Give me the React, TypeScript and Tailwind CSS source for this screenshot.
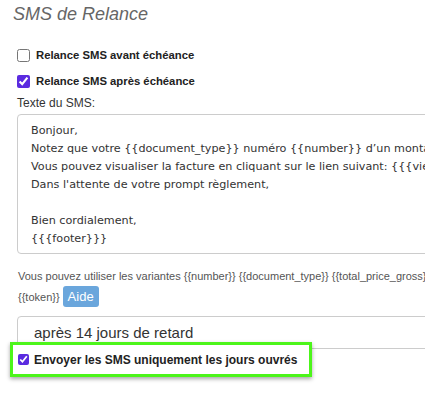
export default function App() {
  const lines = [
    'Bonjour,',
    'Notez que votre {{document_type}} numéro {{number}} d’un montant de {{total_price_gross}} est arrivée à échéance.',
    'Vous pouvez visualiser la facture en cliquant sur le lien suivant: {{{view_link}}}',
    "Dans l'attente de votre prompt règlement,",
    '',
    'Bien cordialement,',
    '{{{footer}}}',
  ];

  return (
    <div className="w-[425px] h-[395px] overflow-hidden bg-white font-['Liberation_Sans',Arial,sans-serif] text-[#333]">
      <div className="w-[600px] pl-[13px] pt-[2px]">
        {/* Title */}
        <h2 className="text-[18px] italic text-[#666] leading-[24px]">SMS de Relance</h2>

        {/* Checkboxes */}
        <div className="mt-[23px] pl-[4px] flex flex-col gap-[13px]">
          <label className="flex items-center gap-[6px] text-[11.3px] font-bold text-[#222] leading-[13px] whitespace-nowrap">
            <input type="checkbox" className="w-[13px] h-[13px] m-0 accent-[#5b2be0]" />
            Relance SMS avant échéance
          </label>
          <label className="flex items-center gap-[6px] text-[11.3px] font-bold text-[#222] leading-[13px] whitespace-nowrap">
            <input type="checkbox" defaultChecked className="w-[13px] h-[13px] m-0 accent-[#5b2be0]" />
            Relance SMS après échéance
          </label>
        </div>

        {/* SMS text */}
        <div className="mt-[7px] pl-[4px] text-[12px] leading-[16px] text-[#333]">Texte du SMS:</div>
        <div className="mt-[3px] ml-[4px] border border-[#ccc] rounded-[4px] h-[140px] pl-[13px] pt-[7px] font-['DejaVu_Sans',Verdana,sans-serif] text-[11.2px] leading-[18px] text-[#333] whitespace-nowrap">
          {lines.map((l, i) => (
            <div key={i} className="h-[18px]">{l}</div>
          ))}
        </div>

        {/* Variants */}
        <div className="mt-[12px] pl-[5px] text-[11px] leading-[20px] text-[#555]">
          <div className="whitespace-nowrap">
            Vous pouvez utiliser les variantes {'{{number}}'} {'{{document_type}}'} {'{{total_price_gross}}'} {'{{view_link}}'}
          </div>
          <div className="flex items-center gap-[3px]">
            <span>{'{{token}}'}</span>
            <span className="bg-[#6aa6dc] text-white text-[13px] leading-[21px] px-[5px] rounded-[3px]">Aide</span>
          </div>
        </div>

        {/* Select */}
        <div className="mt-[9px] ml-[4px] border border-[#ccc] rounded-l-[4px] h-[33px] pl-[16px] pt-[2px] flex items-center text-[15px] text-[#333]">
          après 14 jours de retard
        </div>

        {/* Highlighted checkbox */}
        <div className="-mt-[7px] -ml-[3px] w-[302px] border-[3px] border-[#4cf51a] bg-white shadow-[0_2px_4px_rgba(0,0,0,0.35)] h-[35px] flex items-center pl-[5px] gap-[5px] text-[12px] font-bold text-[#222] whitespace-nowrap">
          <input type="checkbox" defaultChecked className="w-[11px] h-[11px] m-0 accent-[#5b2be0]" />
          Envoyer les SMS uniquement les jours ouvrés
        </div>
      </div>
    </div>
  );
}
